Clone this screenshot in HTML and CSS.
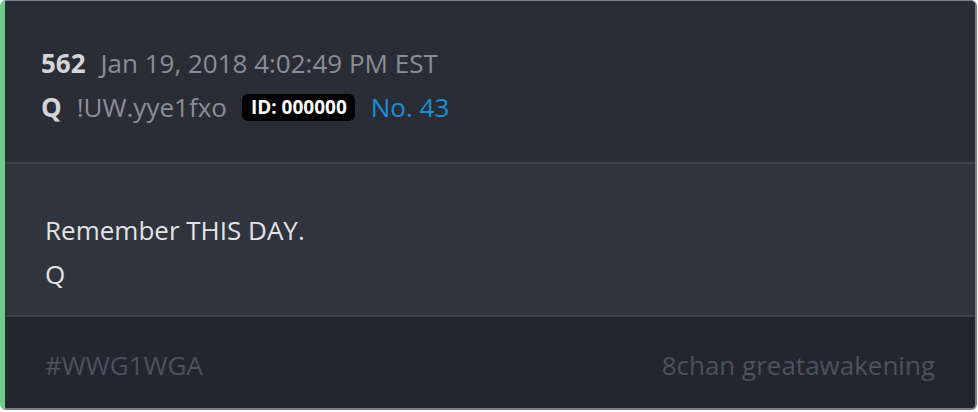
FILE: index.html
```html
<!DOCTYPE html>
<html>
<head>
<meta charset="utf-8">
<link rel="stylesheet" href="styles.css">
</head>
<body>
<div class="card">
  <div class="head">
    <div class="line"><span class="num">562</span><span class="date">Jan 19, 2018 4:02:49 PM EST</span></div>
    <div class="line"><span class="num">Q</span><span class="trip">!UW.yye1fxo</span><span class="badge">ID: 000000</span><span class="no">No. 43</span></div>
  </div>
  <div class="body">
    <div class="text">Remember THIS DAY.</div>
    <div class="text">Q</div>
  </div>
  <div class="foot">
    <span>#WWG1WGA</span>
    <span>8chan greatawakening</span>
  </div>
</div>
</body>
</html>
```
FILE: styles.css
```css
html, body { margin: 0; background: #ffffff; }
body { font-family: "Open Sans", "Noto Sans", sans-serif; }
.card {
  width: 970px;
  height: 407px;
  border: 1px solid #7b7f88;
  border-right-width: 2px;
  border-bottom-width: 2px;
  border-left: 5px solid #6fcb8a;
  border-radius: 6px;
  overflow: hidden;
  display: flex;
  flex-direction: column;
  background: #2a2d36;
}
.head {
  height: 121px;
  padding: 40px 0 0 36px;
  background: #2a2d36;
  border-bottom: 2px solid #3d414b;
  box-sizing: content-box;
}
.line { display: flex; align-items: center; height: 44px; font-size: 26px; }
.num { font-weight: 700; color: #d3d5d9; margin-right: 15px; }
.date, .trip { color: #8a8e99; }
.trip { margin-right: 15px; }
.badge {
  background: #000;
  color: #fff;
  font-weight: 700;
  font-size: 19px;
  padding: 0 8px 0 9px;
  height: 27px;
  line-height: 27px;
  border-radius: 6px;
  margin-right: 16px;
}
.no { color: #1b8ed6; }
.body {
  height: 107px;
  padding: 44px 0 0 40px;
  background: #2f343e;
  border-bottom: 2px solid #3d414b;
}
.text { font-size: 26px; line-height: 44px; color: #e2e3e5; }
.foot {
  flex: 1;
  display: flex;
  justify-content: space-between;
  align-items: center;
  padding: 5px 40px 0;
  background: #23262e;
  color: #4d525d;
  font-size: 26px;
}
```
